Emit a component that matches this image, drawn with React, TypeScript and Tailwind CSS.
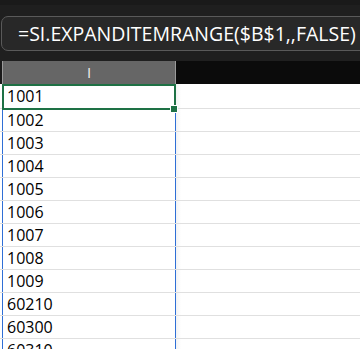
import React from 'react';

const values = ['1001', '1002', '1003', '1004', '1005', '1006', '1007', '1008', '1009', '60210', '60300', '60310'];

const App: React.FC = () => {
    return (
        <div className="w-[360px] h-[349px] overflow-hidden bg-white relative" style={{ fontFamily: '"Open Sans", sans-serif' }}>
            {/* formula bar */}
            <div className="h-[61px] bg-[#1f1f1f] pt-[11px] pl-[1px] overflow-hidden border-t-[5px] border-[#1a1a1a]">
                <div className="w-[380px] h-[35px] rounded-[7px] border border-[#5a5a5a] bg-[#282828] flex items-center pl-[16px]">
                    <span className="text-[19.5px] text-white whitespace-nowrap">=SI.EXPANDITEMRANGE($B$1,,FALSE)</span>
                </div>
            </div>

            {/* column header */}
            <div className="flex h-[23px] bg-[#0b0b0b]">
                <div className="w-[2px] bg-[#1a1a1a]" />
                <div className="w-[174px] bg-[#666666] border-l border-r border-[#9a9a9a] flex items-center justify-center text-[15px] text-[#ececec]">
                    I
                </div>
            </div>

            {/* cells */}
            <div className="flex flex-col">
                {values.map((v, i) => (
                    <div key={v} className={`flex border-b border-[#e0e0e0] ${i === 0 ? 'h-[25px]' : 'h-[23px]'}`}>
                        <div className="w-[2px]" />
                        <div className="w-[174px] border-l border-r border-l-[#2f6fd6] border-r-[#2f6fd6] flex items-center pl-[4px] text-[16px] text-black">
                            {v}
                        </div>
                        <div className="w-[5px] bg-gradient-to-r from-[#f3f3f3] to-white" />
                    </div>
                ))}
            </div>

            {/* active cell */}
            <div className="absolute left-[2px] top-[84px] w-[174px] h-[26px] border-2 border-[#1e7145]" />
            <div className="absolute left-[171px] top-[106px] w-[6px] h-[6px] bg-[#1e7145] outline outline-1 outline-white" />
        </div>
    );
};

export default App;
